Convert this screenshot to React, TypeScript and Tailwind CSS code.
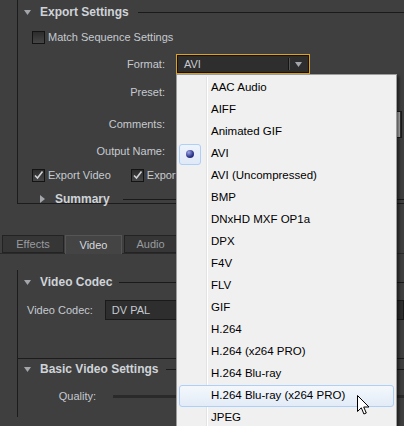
import React from "react";

const formats = [
  "AAC Audio",
  "AIFF",
  "Animated GIF",
  "AVI",
  "AVI (Uncompressed)",
  "BMP",
  "DNxHD MXF OP1a",
  "DPX",
  "F4V",
  "FLV",
  "GIF",
  "H.264",
  "H.264 (x264 PRO)",
  "H.264 Blu-ray",
  "H.264 Blu-ray (x264 PRO)",
  "JPEG",
];

const DownArrow = () => (
  <svg width="7" height="5" viewBox="0 0 7 5" className="shrink-0">
    <path d="M0 0h7L3.5 5z" fill="#a3a7ac" />
  </svg>
);

const RightArrow = () => (
  <svg width="5" height="8" viewBox="0 0 5 8" className="shrink-0">
    <path d="M0 0l5 4-5 4z" fill="#a3a7ac" />
  </svg>
);

const Checkbox = ({ checked }: { checked?: boolean }) => (
  <span className="flex h-[13px] w-[13px] shrink-0 items-center justify-center border border-[#141414] bg-linear-to-b from-[#2c2c2c] to-[#474747]">
    {checked && (
      <svg width="11" height="11" viewBox="0 0 11 11">
        <path d="M2 5.5l2.5 2.5L9.5 1.5" fill="none" stroke="#cfd2d6" strokeWidth="1.6" />
      </svg>
    )}
  </span>
);

// group header: triangle, bold title, rule to the right
const Header = ({ title, gap }: { title: string; gap: number }) => (
  <div className="-mt-[12px] flex h-[24px] items-center pl-[6px]">
    <DownArrow />
    <span className="ml-[9px] text-[12px] font-bold text-[#cfd3d8]">{title}</span>
    <span
      className={
        gap === 9
          ? "ml-[9px] h-px flex-1 bg-[#1a1a1a]"
          : gap === 7
          ? "ml-[7px] h-px flex-1 bg-[#1a1a1a]"
          : "ml-[8px] h-px flex-1 bg-[#1a1a1a]"
      }
    />
  </div>
);

const Label = ({ children }: { children: React.ReactNode }) => (
  <span className="w-[147px] shrink-0 text-right">{children}</span>
);

const Cursor = () => (
  <svg width="14" height="21" viewBox="0 0 14 21" className="absolute left-[357px] top-[395px]">
    <path
      d="M0.5 0.5v16l3.8-3.7 2.6 6.2 2.4-1-2.6-6h5.3z"
      fill="#fff"
      stroke="#000"
      strokeWidth="1"
      strokeLinejoin="miter"
    />
  </svg>
);

export default function App() {
  return (
    <div className="relative h-[426px] w-[404px] overflow-hidden bg-[#3f3f3f] font-['Liberation_Sans',Arial,sans-serif] text-[11px] text-[#c6cad0]">
      {/* export settings */}
      <div className="h-[216px] pt-[12px]">
        <div className="ml-[17px] h-[204px] border-b border-l border-[#1c1c1c]">
          <Header title="Export Settings" gap={9} />
          <div className="flex h-[26px] items-center pl-[14px]">
            <Checkbox />
            <span className="ml-[3px]">Match Sequence Settings</span>
          </div>
          <div className="flex h-[28px] items-center">
            <Label>Format:</Label>
            <div className="ml-[11px] h-[20px] w-[134px] border border-[#e3a214]">
              <div className="flex h-full items-center border border-[#121212] bg-[#2e2e2e]">
                <span className="ml-[6px] flex-1">AVI</span>
                <span className="h-[12px] w-px bg-[#151515]" />
                <span className="h-[12px] w-px bg-[#555]" />
                <span className="ml-[5px] mr-[6px] flex">
                  <DownArrow />
                </span>
              </div>
            </div>
          </div>
          <div className="flex h-[28px] items-center">
            <Label>Preset:</Label>
          </div>
          <div className="flex h-[36px] items-center">
            <Label>Comments:</Label>
            <div className="ml-[11px] flex h-[27px] w-[226px] justify-end border border-[#1b1b1b] bg-[#2f2f2f]">
              <span className="mr-[1px] w-[5px] bg-[#b6b6b6]" />
            </div>
          </div>
          <div className="flex h-[18px] items-center">
            <Label>Output Name:</Label>
          </div>
          <div className="flex h-[30px] items-center pl-[14px]">
            <Checkbox checked />
            <span className="ml-[3px]">Export Video</span>
            <span className="ml-[20px] flex items-center">
              <Checkbox checked />
              <span className="ml-[3px]">Export Audio</span>
            </span>
          </div>
          <div className="flex h-[18px] items-center pl-[22px]">
            <RightArrow />
            <span className="ml-[10px] text-[12px] font-bold text-[#cfd3d8]">Summary</span>
            <span className="ml-[13px] h-px flex-1 bg-[#1a1a1a]" />
          </div>
        </div>
      </div>

      {/* tabs */}
      <div className="mt-[19px] flex h-[19px] border-b border-[#2a2a2a] pl-[2px]">
        <div className="flex w-[62px] items-center justify-center border border-[#232323] bg-[#363636] text-[#999ca1]">
          Effects
        </div>
        <div className="-mb-px ml-px flex w-[57px] items-center justify-center border-x border-t border-[#555] bg-[#444] text-[#d6d9dd]">
          Video
        </div>
        <div className="ml-[2px] flex w-[53px] items-center justify-center border border-[#232323] bg-[#363636] text-[#999ca1]">
          Audio
        </div>
      </div>

      {/* video codec */}
      <div className="pt-[28px]">
        <div className="ml-[17px] h-[89px] border-b border-l border-[#1c1c1c]">
          <Header title="Video Codec" gap={7} />
          <div className="flex h-[32px] items-center pl-[9px]">
            <span>Video Codec:</span>
            <div className="ml-[12px] flex h-[20px] flex-1 items-center border border-[#1a1a1a] bg-[#2e2e2e] pl-[6px]">
              DV PAL
            </div>
          </div>
        </div>
        <div className="ml-[17px] mt-[10px] h-[60px] border-l border-[#1c1c1c]">
          <Header title="Basic Video Settings" gap={8} />
          <div className="flex h-[30px] items-center">
            <span className="w-[78px] text-right">Quality:</span>
            <span className="ml-[17px] h-[3px] flex-1 bg-[#2a2a2a]" />
          </div>
        </div>
      </div>

      {/* open format menu */}
      <div className="absolute left-[176px] top-[74px] h-[360px] w-[221px] border border-[#9c9c9c] bg-[#f0f0f0] pt-[2px] font-['Liberation_Sans',Arial,sans-serif] text-[11.5px] text-black shadow-[2px_2px_3px_rgba(0,0,0,0.55)]">
        <span className="absolute bottom-0 left-[29px] top-[2px] w-[2px] border-l border-r border-l-[#e2e3e3] border-r-white" />
        {formats.map((f) => (
          <div
            key={f}
            className={
              f === "H.264 Blu-ray (x264 PRO)"
                ? "relative mx-[2px] flex h-[22px] items-center rounded-[3px] border border-[#aecff7] bg-linear-to-b from-[#f4f8fc] to-[#e2ebf7]"
                : "relative mx-[2px] flex h-[22px] items-center border border-transparent"
            }
          >
            {f === "AVI" ? (
              <span className="-ml-px flex h-[21px] w-[22px] items-center justify-center rounded-[3px] border border-[#aecff7] bg-linear-to-b from-[#eef4fc] to-[#dfe9f7]">
                <span className="h-[8px] w-[8px] rounded-full bg-[radial-gradient(circle_at_35%_30%,#9fa8e8,#2b3487_60%,#1a1f5e)]" />
              </span>
            ) : (
              <span className="w-[21px]" />
            )}
            <span className="ml-[10px]">{f}</span>
          </div>
        ))}
      </div>

      <Cursor />
    </div>
  );
}
